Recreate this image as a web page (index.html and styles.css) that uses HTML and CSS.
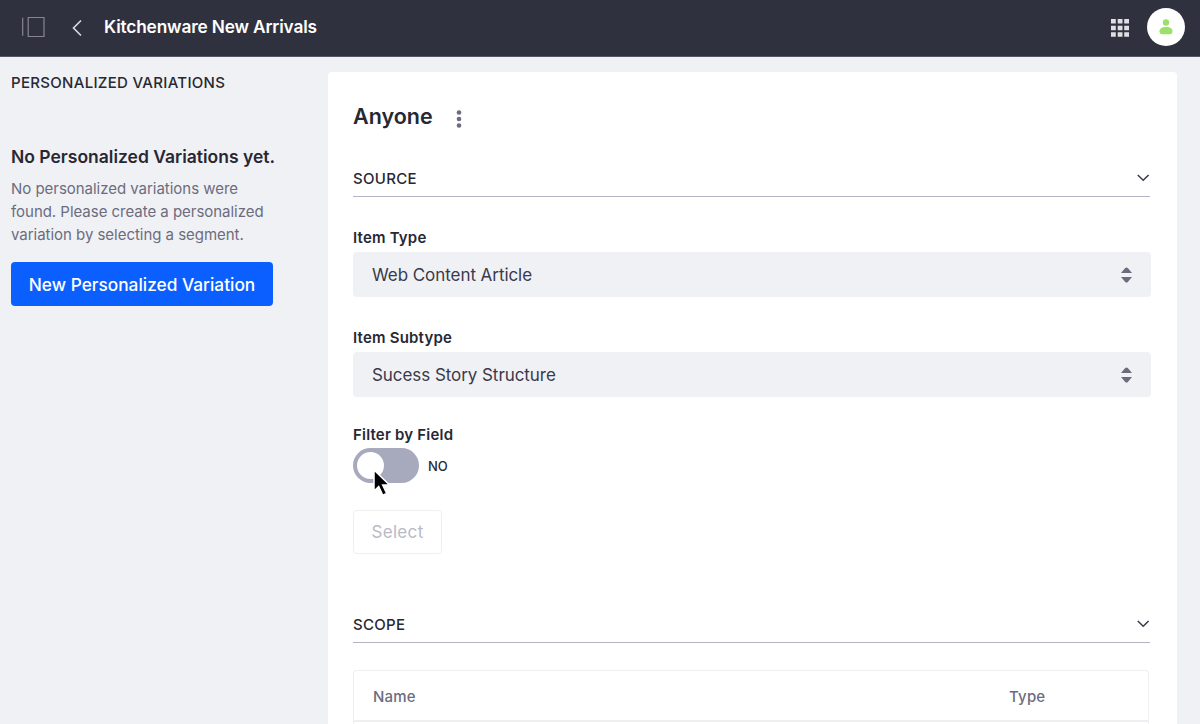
FILE: index.html
```html
<!DOCTYPE html>
<html lang="en">
<head>
<meta charset="utf-8">
<title>Kitchenware New Arrivals</title>
<link rel="stylesheet" href="styles.css">
</head>
<body>
<header class="topbar">
  <svg class="panel-icon" width="24" height="22" viewBox="0 0 24 22"><path d="M.7 1.800v18M6.200 1.500h15.800v19h-15.800z" fill="none" stroke="#85868f" stroke-width="1.200"/></svg>
  <svg class="back-icon" width="12" height="18" viewBox="0 0 12 18"><path d="M10 1.500L2.500 9L10 16.500" fill="none" stroke="#dcdce2" stroke-width="1.600"/></svg>
  <h1 class="title">Kitchenware New Arrivals</h1>
  <svg class="apps-icon" width="18" height="18" viewBox="0 0 18 18"><path d="M0 0h4.800v4.500H0zM6.700 0h4.800v4.500H6.700zM13.200 0H18v4.500h-4.800zM0 6.700h4.800v4.500H0zM6.700 6.700h4.800v4.500H6.700zM13.200 6.700H18v4.500h-4.800zM0 13.300h4.800v4.500H0zM6.700 13.300h4.800v4.500H6.700zM13.200 13.300H18v4.500h-4.800z" fill="#dedee3"/></svg>
  <div class="avatar"><svg width="14" height="16" viewBox="0 0 14 16"><circle cx="7" cy="3.500" r="3.200" fill="#9be169"/><path d="M.5 12.300C.5 9.500 3 8 7 8s6.500 1.500 6.500 4.300c0 2-1 2.900-2.500 2.900H3C1.500 15.200.5 14.300.5 12.300z" fill="#9be169"/></svg></div>
</header>
<div class="layout">
  <aside class="sidebar">
    <h2 class="side-heading">PERSONALIZED VARIATIONS</h2>
    <h3 class="empty-title">No Personalized Variations yet.</h3>
    <p class="empty-text">No personalized variations were<br>found. Please create a personalized<br>variation by selecting a segment.</p>
    <button class="primary"><span>New Personalized Variation</span></button>
  </aside>
  <main class="card">
    <div class="card-head">
      <h2 class="card-title">Anyone</h2>
      <svg width="6" height="18" viewBox="0 0 6 18"><g fill="#6b6c7e"><circle cx="3" cy="2.500" r="2.300"/><circle cx="3" cy="9" r="2.300"/><circle cx="3" cy="15.500" r="2.300"/></g></svg>
    </div>
    <section class="source">
      <div class="section-head"><span>SOURCE</span><svg class="chevron" width="13" height="8" viewBox="0 0 13 8"><path d="M.8 1l5.400 5.300L11.600 1" fill="none" stroke="#393a4a" stroke-width="1.500"/></svg></div>
      <div class="field">
        <label class="label">Item Type</label>
        <div class="select"><span>Web Content Article</span><svg width="11" height="16" viewBox="0 0 11 16"><path d="M0 6L4.200 1Q5.500 0 6.800 1L11 6zM0 10h11L6.800 15Q5.500 16 4.200 15z" fill="#6b6c7e"/></svg></div>
      </div>
      <div class="field">
        <label class="label">Item Subtype</label>
        <div class="select"><span>Sucess Story Structure</span><svg width="11" height="16" viewBox="0 0 11 16"><path d="M0 6L4.200 1Q5.500 0 6.800 1L11 6zM0 10h11L6.800 15Q5.500 16 4.200 15z" fill="#6b6c7e"/></svg></div>
      </div>
      <div class="filter">
        <label class="label">Filter by Field</label>
        <div class="toggle-row">
          <div class="toggle"><div class="knob"></div>
            <svg class="cursor" width="20" height="30" viewBox="0 0 20 30"><path d="M2 2v21l4.700-4.500 4.100 8.700 3.900-1.800-4-8.400h6.800z" fill="#000" stroke="#fff" stroke-width="1.500"/></svg>
          </div>
          <span class="no">NO</span>
        </div>
        <button class="secondary" disabled><span>Select</span></button>
      </div>
    </section>
    <section class="scope">
      <div class="section-head"><span>SCOPE</span><svg class="chevron" width="13" height="8" viewBox="0 0 13 8"><path d="M.8 1l5.400 5.300L11.600 1" fill="none" stroke="#393a4a" stroke-width="1.500"/></svg></div>
      <div class="table">
        <div class="row"><span class="name">Name</span><span class="type">Type</span></div>
      </div>
    </section>
  </main>
</div>
</body>
</html>
```
FILE: styles.css
```css
* { box-sizing: border-box; }
body { margin: 0; height: 724px; overflow: hidden; background: #f0f1f5; color: #272833; font-family: Inter, sans-serif; }
h1, h2, h3, p { margin: 0; }
svg { display: block; flex: none; }
span, label, h1, h2, h3, p { white-space: nowrap; }
.topbar { height: 57px; background: #30313f; border-bottom: 1px solid #555665; display: flex; align-items: center; padding: 0 15px 3px 22px; }
.back-icon { margin-left: 25px; margin-top: 2px; }
.title { margin-left: 21px; margin-top: 1px; color: #fff; font-size: 17.3px; letter-spacing: -0.16px; font-weight: 600; line-height: 24px; }
.apps-icon { margin-left: auto; margin-right: 18px; margin-top: 2px; }
.avatar { width: 38px; height: 38px; border-radius: 50%; background: #fff; display: flex; align-items: center; justify-content: center; }
.layout { display: flex; height: 667px; }
.sidebar { width: 328px; flex: none; padding: 15px 0 0 11px; }
.side-heading { font-size: 15px; letter-spacing: 0.3px; font-weight: 500; line-height: 22px; }
.empty-title { margin-top: 50px; font-size: 17.5px; font-weight: 600; line-height: 26px; }
.empty-text { margin-top: 7px; font-size: 15px; letter-spacing: -0.03px; line-height: 23px; color: #6b6c7e; }
.primary { display: block; margin-top: 16px; width: 262px; height: 44px; border: 0; border-radius: 4px; background: #0b5fff; color: #fff; font: 500 17.3px/24px Inter, sans-serif; padding: 1px 0 0; }
.card { width: 849px; height: 652px; overflow: hidden; margin-top: 15px; background: #fff; border-radius: 4px 4px 0 0; padding: 29px 26px 0 25px; }
.card-head { display: flex; align-items: center; height: 30px; }
.card-head svg { margin-left: 23px; margin-top: 5px; }
.card-title { font-size: 21.5px; font-weight: 600; line-height: 30px; }
.section-head { display: flex; align-items: center; justify-content: space-between; height: 37px; border-bottom: 1px solid #b4b5c2; font-size: 15px; letter-spacing: 0.3px; font-weight: 500; width: 797px; }
.chevron { margin-top: -1px; }
.source { margin-top: 29px; }
.field { padding-top: 30px; height: 100px; }
.label { display: block; font-size: 15px; letter-spacing: 0.2px; font-weight: 600; line-height: 22px; }
.select { display: flex; align-items: center; justify-content: space-between; margin-top: 3px; height: 45px; background: #f0f1f5; border-radius: 4px; padding: 0 19px; font-size: 17px; letter-spacing: -0.06px; color: #393a4a; }
.filter { padding-top: 27px; }
.toggle-row { display: flex; align-items: center; margin-top: 2px; height: 35px; }
.toggle { position: relative; width: 66px; height: 35px; border-radius: 18px; background: #a7a9bc; padding: 4px; }
.knob { width: 27px; height: 27px; border-radius: 50%; background: #fff; }
.cursor { position: absolute; left: 19px; top: 20px; }
.no { margin-left: 9px; font-size: 13px; font-weight: 500; }
.secondary { display: block; margin-top: 27px; width: 89px; height: 44px; border: 1px solid #eeeff3; border-radius: 4px; background: #fff; color: #b9bac5; font: 400 17px/24px Inter, sans-serif; letter-spacing: 0.35px; padding: 0; }
.scope { margin-top: 52px; }
.table { margin-top: 27px; width: 796px; border: 1px solid #eeeff3; border-bottom: 0; border-radius: 4px 4px 0 0; height: 54px; }
.row { display: flex; align-items: center; height: 51px; border-bottom: 2px solid #eeeff3; padding: 2px 0 0 19px; font-size: 15px; letter-spacing: 0.2px; font-weight: 500; color: #6b6c7e; }
.name { width: 636px; }
```
